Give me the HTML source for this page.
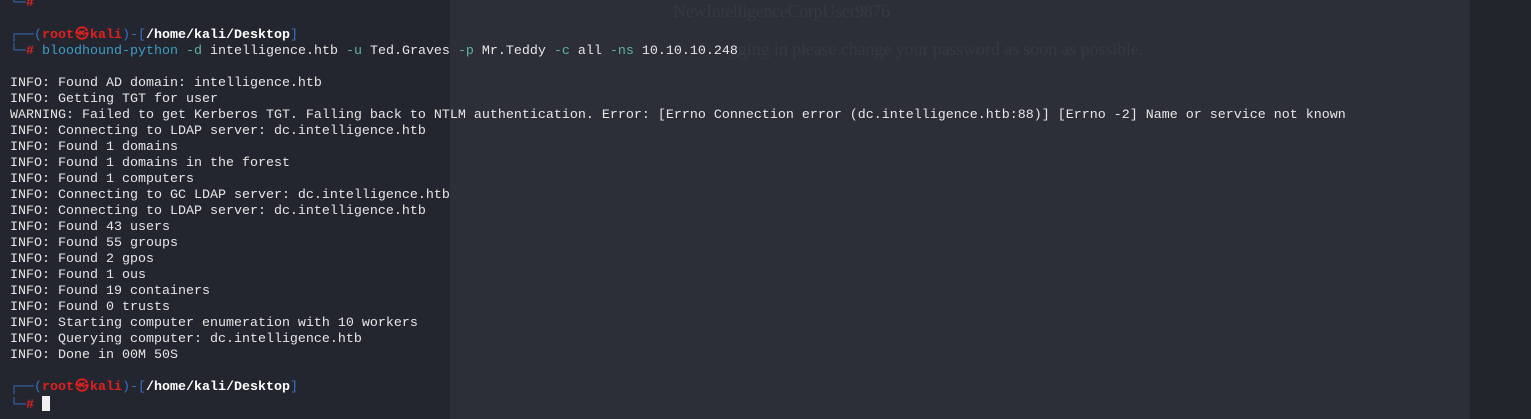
<!DOCTYPE html>
<html><head><meta charset="utf-8"><style>
html,body{margin:0;padding:0;width:1531px;height:419px;overflow:hidden;background:#23262e;}
.mid{position:absolute;left:450px;top:0;width:1020px;height:419px;background:#2c2f38;}
.right{position:absolute;left:1470px;top:0;width:61px;height:419px;background:#22252c;}
.bg{position:absolute;font-family:"Liberation Serif",serif;font-size:18px;color:#363942;white-space:nowrap;letter-spacing:-0.3px;}
.t{position:absolute;left:10px;top:-4px;font-family:"Liberation Mono","DejaVu Sans Mono",monospace;font-size:13.33px;line-height:16px;color:#e6e6e6;white-space:pre;}
.b{color:#3a6fc4}.r{color:#e0201f;font-weight:bold}.w{color:#fff;font-weight:bold}.c{color:#3f9bc7}.g{color:#5fb3a0}
.at{display:inline-block;width:16px;text-align:center}
.cur{display:inline-block;width:8px;height:15px;background:#f0f0f0;vertical-align:-3px}
</style></head><body>
<div class="mid"></div><div class="right"></div>
<div class="bg" style="left:673px;top:1px">NewIntelligenceCorpUser9876</div>
<div class="bg" style="left:729px;top:39px;letter-spacing:-0.1px">gging in please change your password as soon as possible.</div>
<div class="t"><span class="b">└─</span><span class="r">#</span>

<span class="b">┌──(</span><span class="r">root<span class="at">㉿</span>kali</span><span class="b">)-[</span><span class="w">/home/kali/Desktop</span><span class="b">]</span>
<span class="b">└─</span><span class="r">#</span> <span class="c">bloodhound-python</span> <span class="g">-d</span> intelligence.htb <span class="g">-u</span> Ted.Graves <span class="g">-p</span> Mr.Teddy <span class="g">-c</span> all <span class="g">-ns</span> 10.10.10.248

INFO: Found AD domain: intelligence.htb
INFO: Getting TGT for user
WARNING: Failed to get Kerberos TGT. Falling back to NTLM authentication. Error: [Errno Connection error (dc.intelligence.htb:88)] [Errno -2] Name or service not known
INFO: Connecting to LDAP server: dc.intelligence.htb
INFO: Found 1 domains
INFO: Found 1 domains in the forest
INFO: Found 1 computers
INFO: Connecting to GC LDAP server: dc.intelligence.htb
INFO: Connecting to LDAP server: dc.intelligence.htb
INFO: Found 43 users
INFO: Found 55 groups
INFO: Found 2 gpos
INFO: Found 1 ous
INFO: Found 19 containers
INFO: Found 0 trusts
INFO: Starting computer enumeration with 10 workers
INFO: Querying computer: dc.intelligence.htb
INFO: Done in 00M 50S

<span class="b">┌──(</span><span class="r">root<span class="at">㉿</span>kali</span><span class="b">)-[</span><span class="w">/home/kali/Desktop</span><span class="b">]</span>
<span class="b">└─</span><span class="r">#</span> <span class="cur"></span></div>
</body></html>
